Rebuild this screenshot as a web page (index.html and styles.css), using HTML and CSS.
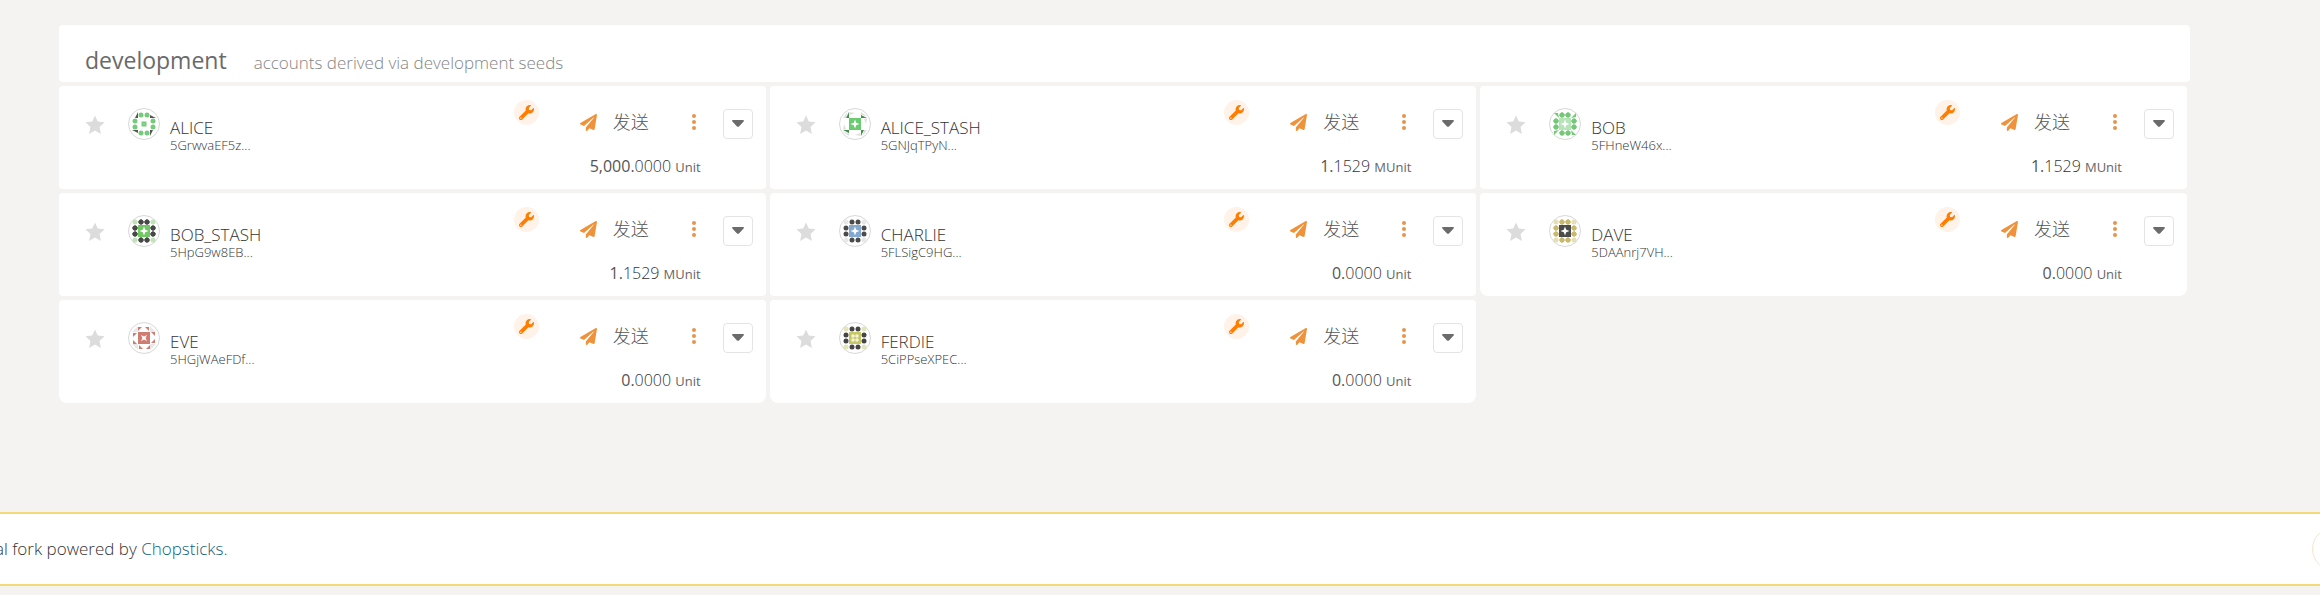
FILE: index.html
```html
<!DOCTYPE html>
<html lang="zh">
<head>
<meta charset="utf-8">
<title>development accounts</title>
<link rel="stylesheet" href="styles.css">
</head>
<body>
<svg class="defs" aria-hidden="true">
  <symbol id="star" viewBox="0 0 18 18"><path d="M9 .4 11.5 5.8 17.6 6.5 13.1 10.7 14.3 17 9 14 3.700 17 4.900 10.700.4 6.500 6.500 5.800Z" stroke-linejoin="round"/></symbol>
  <symbol id="wrench" viewBox="0 0 512 512"><path d="M507.700 109.100c-2.200-9-13.500-12.100-20.100-5.500l-74.400 74.400-67.900-11.300L334 98.900l74.400-74.400c6.600-6.600 3.400-17.900-5.700-20.200-47.400-11.700-99.600.9-136.600 37.900-39.600 39.600-50.500 97.100-34.100 147.200L18.700 402.800c-25 25-25 65.500 0 90.500s65.500 25 90.500 0l213.200-213.200c50.100 16.700 107.500 5.700 147.400-34.200 37.100-37.100 49.700-89.300 37.900-136.800zM64 472c-13.200 0-24-10.800-24-24 0-13.300 10.700-24 24-24s24 10.700 24 24c0 13.200-10.700 24-24 24z"/></symbol>
  <symbol id="plane" viewBox="0 0 512 512"><path d="M476 3.200 12.500 270.600c-18.100 10.400-15.800 35.600 2.200 43.200L121 358.400l287.300-253.200c5.500-4.900 13.300 2.600 8.600 8.300L176 407v80.500c0 23.600 28.500 32.900 42.500 15.800L282 426l124.600 52.200c14.200 6 30.400-2.900 33-18.200l72-432C515 7.800 493.300-6.800 476 3.200z"/></symbol>
  <symbol id="dots" viewBox="0 0 6 18"><circle cx="3" cy="3" r="2"/><circle cx="3" cy="9" r="2"/><circle cx="3" cy="15" r="2"/></symbol>
  <symbol id="caret" viewBox="0 0 12 8"><path d="M1 0h10c1 0 1.200 1 .6 1.600L7 6.400c-.6.6-1.400.6-2 0L.4 1.600C-.2 1 0 0 1 0Z"/></symbol>

  <circle id="dot" cx="3" cy="3" r="2.500"/>
  <path id="plus" d="M3 0 4.500 1.500 6 3 4.500 4.500 3 6 1.500 4.500 0 3 1.500 1.500Z"/>
  <g id="dot-ring">
    <use href="#dot" x="6"/><use href="#dot" x="12"/><use href="#dot" x="6" y="18"/><use href="#dot" x="12" y="18"/>
    <use href="#dot" y="6"/><use href="#dot" y="12"/><use href="#dot" x="18" y="6"/><use href="#dot" x="18" y="12"/>
  </g>
  <g id="plus-ring">
    <use href="#plus" x="6"/><use href="#plus" x="12"/><use href="#plus" x="6" y="18"/><use href="#plus" x="12" y="18"/>
    <use href="#plus" y="6"/><use href="#plus" y="12"/><use href="#plus" x="18" y="6"/><use href="#plus" x="18" y="12"/>
  </g>
  <g id="dot-corners"><use href="#dot"/><use href="#dot" x="18"/><use href="#dot" y="18"/><use href="#dot" x="18" y="18"/></g>
  <path id="star-core" fill-rule="evenodd" d="M6 6H18V18H6ZM12 7.500 10.800 10.800 7.500 12 10.800 13.200 12 16.500 13.200 13.200 16.500 12 13.200 10.800Z"/>
  <g id="blades">
    <path id="blade" d="M6 0V6H3Z"/><use href="#blade" transform="rotate(90 12 12)"/><use href="#blade" transform="rotate(180 12 12)"/><use href="#blade" transform="rotate(270 12 12)"/>
  </g>
  <g id="flags">
    <g id="flag"><path d="M6 1H10L6 5Z"/><path d="M13 1H17V5Z"/></g><use href="#flag" transform="rotate(90 12 12)"/><use href="#flag" transform="rotate(180 12 12)"/><use href="#flag" transform="rotate(270 12 12)"/>
  </g>

  <symbol id="id-alice" viewBox="-3 -3 30 30"><use href="#blades" fill="#555"/><use href="#dot-ring" fill="#78ca7b"/><path d="M9.500 9.500h5v5h-5Z" fill="#78ca7b"/><path d="M11.500 11.500h1v1h-1Z" fill="#c9edca"/></symbol>
  <symbol id="id-alice-stash" viewBox="-3 -3 30 30">
    <g id="vane" fill="#e0e0e0"><path d="M6 0 12 1 7 3Z"/><path d="M0 6 4 0 3 6Z"/></g>
    <use href="#vane" transform="rotate(90 12 12)"/><use href="#vane" transform="rotate(180 12 12)"/><use href="#vane" transform="rotate(270 12 12)"/>
    <use href="#blades" fill="#458e47"/>
    <use href="#star-core" fill="#6bcb70"/>
  </symbol>
  <symbol id="id-bob" viewBox="-3 -3 30 30"><use href="#plus-ring" fill="#75c878"/><use href="#dot-ring" fill="#75c878"/><g fill="#75c878"><path id="tip" d="M1 1H5L6 6Z"/><use href="#tip" transform="rotate(90 12 12)"/><use href="#tip" transform="rotate(180 12 12)"/><use href="#tip" transform="rotate(270 12 12)"/></g><use href="#star-core" fill="#b7e3b8"/></symbol>
  <symbol id="id-bob-stash" viewBox="-3 -3 30 30"><use href="#dot-corners" fill="#bfe3b7"/><use href="#plus-ring" fill="#484848"/><use href="#dot-ring" fill="#484848"/><use href="#star-core" fill="#72c765"/></symbol>
  <symbol id="id-charlie" viewBox="-3 -3 30 30"><use href="#dot-corners" fill="#e8e8e8"/><use href="#dot-ring" fill="#4b4b4b"/><use href="#star-core" fill="#83a8d2"/></symbol>
  <symbol id="id-dave" viewBox="-3 -3 30 30"><use href="#dot-corners" fill="#e5dfb8"/><use href="#plus-ring" fill="#c9b96e"/><use href="#dot-ring" fill="#c9b96e"/><use href="#star-core" fill="#4b4b4b"/></symbol>
  <symbol id="id-eve" viewBox="-3 -3 30 30"><path d="M6 0 0 6H6ZM18 0 24 6H18ZM0 18H6V24ZM18 18H24L18 24Z" fill="#e8e8e8"/><use href="#flags" fill="#cf7d72"/><path fill="#cf7d72" fill-rule="evenodd" d="M6 6H18V18H6ZM9 9 10.500 12 9 15 12 13.500 15 15 13.500 12 15 9 12 10.500Z"/></symbol>
  <symbol id="id-ferdie" viewBox="-3 -3 30 30"><use href="#dot-corners" fill="#e3e5b9"/><use href="#dot-ring" fill="#454545"/><path d="M6 6H18V18H6Z" fill="#c5c765"/><g fill="#f4f4d8"><circle cx="10" cy="10" r="1.800"/><circle cx="14" cy="10" r="1.800"/><circle cx="10" cy="14" r="1.800"/><circle cx="14" cy="14" r="1.800"/></g></symbol>
</svg>

<main class="page">
  <header class="group-head">
    <h1 class="group-title">development</h1>
    <p class="group-note">accounts derived via development seeds</p>
  </header>
  <section class="accounts" id="accounts"></section>
</main>

<footer class="notice">
  <p class="notice-text">al fork powered by <a class="notice-link" href="#chopsticks">Chopsticks.</a></p>
  <button class="notice-close" type="button" aria-label="close"></button>
</footer>
<script src="accounts.js"></script>
</body>
</html>
```

FILE: styles.css
```css
* { box-sizing: border-box; }

body {
  margin: 0;
  background: #f4f3f1;
  color: #333;
  font-family: "Open Sans", "Noto Sans", "Noto Sans CJK SC", sans-serif;
  font-size: 17px;
  font-weight: 300;
  line-height: 24px;
  overflow-x: hidden;
}

h1, h2, p { margin: 0; font-weight: inherit; }
svg { display: block; }
.defs { position: absolute; width: 0; height: 0; }

button {
  padding: 0;
  border: 0;
  background: none;
  color: inherit;
  font: inherit;
}

.page { padding: 25px 130px 0 59px; }

.group-head {
  display: flex;
  align-items: baseline;
  gap: 27px;
  height: 57px;
  padding: 18px 26px 0;
  border-radius: 4px;
  background: #fff;
}
.group-title { color: #6a6a6a; font-size: 23px; font-weight: 400; line-height: 34px; }
.group-note { color: #858585; font-size: 17px; }

.accounts {
  display: grid;
  grid-template-columns: repeat(3, 1fr);
  gap: 4px;
  padding: 4px 3px 0 0;
}

.card {
  display: flex;
  height: 103px;
  padding: 0 13px 0 26px;
  border-radius: 4px;
  background: #fff;
}
.card:nth-child(n + 6) { border-radius: 4px 4px 8px 8px; }
.star { width: 20px; height: 20px; margin-top: 29px; }
.star svg { width: 20px; height: 20px; fill: #dcdcdc; }
.avatar {
  width: 32px;
  height: 32px;
  margin: 22px 10px 0 23px;
  border: 1px solid #d8d8d8;
  border-radius: 50%;
}
.avatar svg { width: 30px; height: 30px; }
.identity { flex: 1; padding-top: 32px; }
.name { font-size: 17px; line-height: 20px; }
.address { font-size: 13px; line-height: 14px; }

.badge {
  display: grid;
  place-items: center;
  width: 25px;
  height: 25px;
  margin-top: 14px;
  border-radius: 50%;
  background: #fef2e9;
}
.badge svg { width: 15px; height: 15px; fill: #ff7d01; }

.controls { width: 162px; padding-top: 23px; }
.actions { display: flex; align-items: center; justify-content: flex-end; height: 26px; }
.send { display: flex; align-items: center; gap: 15px; margin-right: 42px; font-size: 18px; }
.send span { color: #555; }
.send svg { width: 19px; height: 17px; fill: #ef9239; }
.more svg { width: 6px; height: 18px; fill: #e5954c; }
.more { margin-right: 4px; }
.balance { margin-top: 19px; font-size: 16px; line-height: 24px; text-align: right; }
.whole { color: #555; font-weight: 400; }
.unit { color: #666; font-size: 13px; font-weight: 400; }

.toggle {
  display: grid;
  place-items: center;
  width: 30px;
  height: 30px;
  margin: 23px 0 0 22px;
  border: 1px solid #e4e4e4;
  border-radius: 4px;
}
.toggle svg { width: 12px; height: 8px; fill: #6b6b6b; }

.notice {
  display: flex;
  align-items: center;
  justify-content: space-between;
  height: 74px;
  margin-top: 109px;
  border: solid #f3d977;
  border-width: 2px 0;
  background: #fff;
  overflow: hidden;
}
.notice-text { margin-left: -5px; white-space: nowrap; }
.notice-link { color: #0f5f7d; text-decoration: none; }
.notice-close {
  flex: none;
  width: 44px;
  height: 44px;
  margin-right: -36px;
  border: 1px solid #fbe3cf;
  border-radius: 50%;
}
```

FILE: accounts.js
```js
const accounts = [
  ['ALICE', '5GrwvaEF5z...', '5,000', '0000', 'Unit', 'alice'],
  ['ALICE_STASH', '5GNJqTPyN...', '1', '1529', 'MUnit', 'alice-stash'],
  ['BOB', '5FHneW46x...', '1', '1529', 'MUnit', 'bob'],
  ['BOB_STASH', '5HpG9w8EB...', '1', '1529', 'MUnit', 'bob-stash'],
  ['CHARLIE', '5FLSigC9HG...', '0', '0000', 'Unit', 'charlie'],
  ['DAVE', '5DAAnrj7VH...', '0', '0000', 'Unit', 'dave'],
  ['EVE', '5HGjWAeFDf...', '0', '0000', 'Unit', 'eve'],
  ['FERDIE', '5CiPPseXPEC...', '0', '0000', 'Unit', 'ferdie'],
];

const icon = (id) => `<svg aria-hidden="true"><use href="#${id}"/></svg>`;

document.getElementById('accounts').innerHTML = accounts.map(([name, address, whole, part, unit, id]) => `
  <article class="card">
    <button class="star" type="button" aria-label="favorite ${name}">${icon('star')}</button>
    <div class="avatar">${icon('id-' + id)}</div>
    <div class="identity"><h2 class="name">${name}</h2><p class="address">${address}</p></div>
    <span class="badge">${icon('wrench')}</span>
    <div class="controls">
      <div class="actions">
        <button class="send" type="button">${icon('plane')}<span>发送</span></button>
        <button class="more" type="button" aria-label="more for ${name}">${icon('dots')}</button>
      </div>
      <p class="balance"><span class="whole">${whole}.</span>${part} <span class="unit">${unit}</span></p>
    </div>
    <button class="toggle" type="button" aria-label="expand ${name}">${icon('caret')}</button>
  </article>`).join('');
```
